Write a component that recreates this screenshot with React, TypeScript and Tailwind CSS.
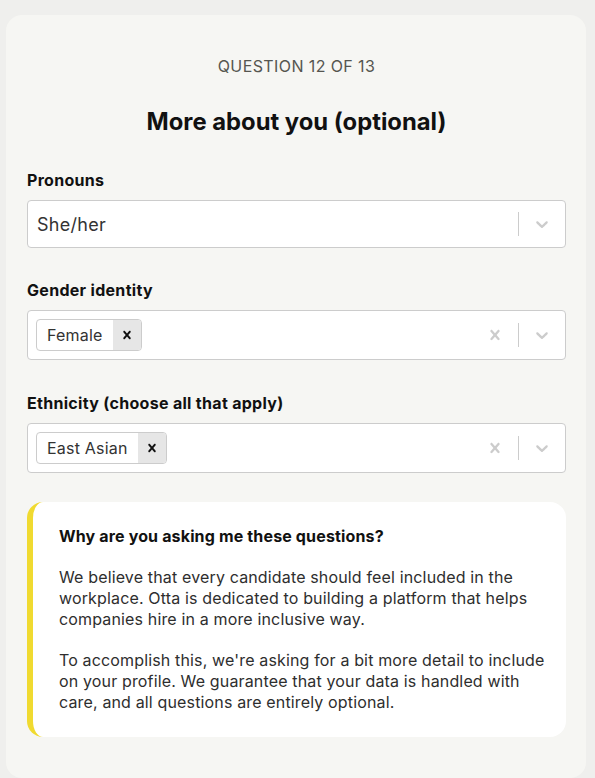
import React from "react";

const font = { fontFamily: "Inter, 'Noto Sans', sans-serif" };

function Chevron() {
  return (
    <svg viewBox="0 0 20 20" width="20" height="20" fill="#cccccc" aria-hidden="true">
      <path d="M4.516 7.548c0.436-0.446 1.043-0.481 1.576 0l3.908 3.747 3.908-3.747c0.533-0.481 1.141-0.446 1.574 0 0.436 0.445 0.408 1.197 0 1.615-0.406 0.418-4.695 4.502-4.695 4.502-0.217 0.223-0.502 0.335-0.787 0.335s-0.57-0.112-0.789-0.335c0 0-4.287-4.084-4.695-4.502s-0.436-1.17 0-1.615z" />
    </svg>
  );
}

function Cross({ size = 20, color = "#cccccc" }: { size?: number; color?: string }) {
  return (
    <svg viewBox="0 0 20 20" width={size} height={size} fill={color} aria-hidden="true">
      <path d="M14.348 14.849c-0.469 0.469-1.229 0.469-1.697 0l-2.651-3.030-2.651 3.029c-0.469 0.469-1.229 0.469-1.697 0-0.469-0.469-0.469-1.229 0-1.697l2.758-3.15-2.759-3.152c-0.469-0.469-0.469-1.228 0-1.697s1.228-0.469 1.697 0l2.652 3.031 2.651-3.031c0.469-0.469 1.228-0.469 1.697 0s0.469 1.229 0 1.697l-2.758 3.152 2.758 3.15c0.469 0.469 0.469 1.229 0 1.698z" />
    </svg>
  );
}

function Chip({ label }: { label: string }) {
  return (
    <div className="flex h-[32px] items-stretch overflow-hidden rounded-[4px] border border-[#cccccc] bg-white">
      <span className="flex items-center pl-[10px] pr-[10px] text-[16px] tracking-[0.2px] text-[#333333]">
        {label}
      </span>
      <span className="flex w-[28px] items-center justify-center bg-[#e6e6e6]">
        <Cross size={16} color="#111111" />
      </span>
    </div>
  );
}

function Indicators({ clearable }: { clearable: boolean }) {
  return (
    <div className="flex items-center self-stretch">
      {clearable && (
        <div className="flex w-[46px] items-center justify-center">
          <Cross size={20} />
        </div>
      )}
      <span className="h-[24px] w-px bg-[#cccccc]" />
      <div className="flex w-[46px] items-center justify-center">
        <Chevron />
      </div>
    </div>
  );
}

export default function App() {
  return (
    <div className="h-[778px] w-[595px] overflow-hidden bg-[#efefed]" style={font}>
      <div className="ml-[6px] mt-[15px] h-[763px] w-[580px] rounded-[16px] bg-[#f6f6f3] pl-[21px] pr-[20px] pt-[39px]">
        <div className="text-center text-[16px] leading-[24px] tracking-[0.4px] text-[#555550]">
          QUESTION 12 OF 13
        </div>
        <h1 className="mt-[28px] text-center text-[23.8px] font-bold leading-[31px] text-[#111111]">
          More about you (optional)
        </h1>

        <div className="mt-[31px]">
          <div className="text-[16px] font-bold leading-[24px] tracking-[0.3px] text-[#111111]">
            Pronouns
          </div>
          <div className="mt-[8px] flex h-[48px] items-center rounded-[4px] border border-[#cccccc] bg-white">
            <div className="flex-1 pl-[9px] text-[18px] tracking-[0.3px] text-[#333333]">She/her</div>
            <Indicators clearable={false} />
          </div>
        </div>

        <div className="mt-[30px]">
          <div className="text-[16px] font-bold leading-[24px] tracking-[0.3px] text-[#111111]">
            Gender identity
          </div>
          <div className="mt-[8px] flex h-[50px] items-center rounded-[4px] border border-[#cccccc] bg-white">
            <div className="flex flex-1 pl-[8px]">
              <Chip label="Female" />
            </div>
            <Indicators clearable={true} />
          </div>
        </div>

        <div className="mt-[31px]">
          <div className="text-[16px] font-bold leading-[24px] tracking-[0.3px] text-[#111111]">
            Ethnicity (choose all that apply)
          </div>
          <div className="mt-[8px] flex h-[50px] items-center rounded-[4px] border border-[#cccccc] bg-white">
            <div className="flex flex-1 pl-[8px]">
              <Chip label="East Asian" />
            </div>
            <Indicators clearable={true} />
          </div>
        </div>

        <div className="mt-[29px] rounded-[16px] border-l-[6px] border-[#f0da30] bg-white pb-[24px] pl-[26px] pr-[14px] pt-[24px] text-[16px] leading-[21px] tracking-[0.15px]">
          <div className="font-bold text-[#111111]">Why are you asking me these questions?</div>
          <p className="mt-[20px] text-[#2e2e2e]">
            We believe that every candidate should feel included in the workplace. Otta is dedicated
            to building a platform that helps companies hire in a more inclusive way.
          </p>
          <p className="mt-[20px] text-[#2e2e2e]">
            To accomplish this, we're asking for a bit more detail to include on your profile. We
            guarantee that your data is handled with care, and all questions are entirely optional.
          </p>
        </div>
      </div>
    </div>
  );
}
